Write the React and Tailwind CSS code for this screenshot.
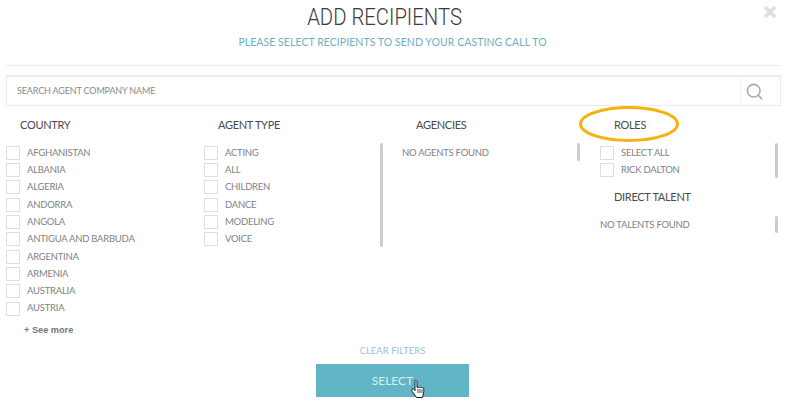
import { Search } from 'lucide-react';

const countries = ['AFGHANISTAN', 'ALBANIA', 'ALGERIA', 'ANDORRA', 'ANGOLA', 'ANTIGUA AND BARBUDA', 'ARGENTINA', 'ARMENIA', 'AUSTRALIA', 'AUSTRIA'];
const agentTypes = ['ACTING', 'ALL', 'CHILDREN', 'DANCE', 'MODELING', 'VOICE'];
const roles = ['SELECT ALL', 'RICK DALTON'];

function CheckRow({ label }) {
    return (
        <div className="flex h-[17.33px] items-center">
            <span className="h-[14px] w-[14px] shrink-0 border border-[#dedede] bg-white"></span>
            <span className="ml-[7px] whitespace-nowrap text-[9.5px] tracking-[-0.25px] text-[#827f85]">{label}</span>
        </div>
    );
}

function Heading({ children, className = '' }) {
    return <h3 className={`text-[11px] font-normal leading-[16px] tracking-[-0.3px] text-[#4a4a4a] ${className}`}>{children}</h3>;
}

function ScrollBar({ className = '' }) {
    return <div className={`w-[3px] shrink-0 rounded-sm bg-[#cccccc] ${className}`}></div>;
}

export default function App() {
    return (
        <div className="relative h-[402px] w-[787px] overflow-hidden bg-white font-['Lato',sans-serif]">
            <header className="flex h-[65px] flex-col items-center">
                <h1 className="mr-[17px] mt-[3px] scale-x-[0.845] font-['Roboto',sans-serif] text-[24px] font-light leading-[28px] text-[#3b3b3b]">ADD RECIPIENTS</h1>
                <p className="mr-[2px] mt-[3px] text-[10.5px] leading-[16px] tracking-[0.06px] text-[#6fb0bf]">PLEASE SELECT RECIPIENTS TO SEND YOUR CASTING CALL TO</p>
            </header>
            <button className="absolute right-[10px] top-[4px] text-[#dedede]">
                <svg width="14" height="16" viewBox="0 0 14 16"><path d="M2 3l10 10M12 3L2 13" stroke="currentColor" strokeWidth="3.6" /></svg>
            </button>

            <div className="mx-[6px] h-[1px] bg-[#eeeeee]"></div>

            <div className="mx-[6px] mt-[9px] flex h-[31px] items-center justify-between border border-t-2 border-[#ececec]">
                <span className="pl-[10px] text-[9px] tracking-[-0.15px] text-[#8a8a8a]">SEARCH AGENT COMPANY NAME</span>
                <div className="flex h-full w-[40px] items-center justify-center border-l border-[#f3f3f3]">
                    <Search size={19} strokeWidth={2} className="-translate-x-[6px] text-[#a9a9a9]" />
                </div>
            </div>

            <div className="ml-[6px] mt-[11px] flex">
                <section className="w-[198px]">
                    <Heading className="ml-[14px]">COUNTRY</Heading>
                    <div className="mt-[11px]">
                        {countries.map((c) => <CheckRow key={c} label={c} />)}
                    </div>
                    <a className="ml-[18px] mt-[6px] block font-['Liberation_Sans',sans-serif] text-[9.2px] font-bold leading-[14px] text-[#777777]">+ See more</a>
                </section>

                <section className="w-[198px]">
                    <Heading className="ml-[14px]">AGENT TYPE</Heading>
                    <div className="mt-[11px] flex">
                        <div className="w-[176px]">
                            {agentTypes.map((c) => <CheckRow key={c} label={c} />)}
                        </div>
                        <ScrollBar className="-mt-[1px] h-[104px]" />
                    </div>
                </section>

                <section className="w-[198px]">
                    <Heading className="ml-[14px]">AGENCIES</Heading>
                    <div className="mt-[11px] flex">
                        <p className="w-[175px] pt-[1px] text-[9.5px] leading-[16px] tracking-[-0.25px] text-[#827f85]">NO AGENTS FOUND</p>
                        <ScrollBar className="-mt-[1px] h-[18px]" />
                    </div>
                </section>

                <section className="w-[178px]">
                    <Heading className="ml-[14px]">ROLES</Heading>
                    <div className="mt-[11px] flex justify-between">
                        <div>
                            {roles.map((c) => <CheckRow key={c} label={c} />)}
                        </div>
                        <ScrollBar className="-mt-[1px] h-[35px]" />
                    </div>
                    <Heading className="ml-[14px] mt-[10px]">DIRECT TALENT</Heading>
                    <div className="mt-[11px] flex justify-between">
                        <p className="pt-[1px] text-[9.5px] leading-[16px] tracking-[-0.25px] text-[#827f85]">NO TALENTS FOUND</p>
                        <ScrollBar className="h-[17px]" />
                    </div>
                </section>
            </div>

            <div className="absolute bottom-[5px] left-[316px] w-[153px]">
                <p className="mb-[6px] text-center text-[9.5px] leading-[14px] text-[#9cc4cf]">CLEAR FILTERS</p>
                <button className="h-[33px] w-full bg-[#62b5c4] text-center text-[12px] text-[#d7eef2]">SELECT</button>
            </div>

            {/* highlight around the roles heading */}
            <svg className="absolute left-[577px] top-[105px]" width="104" height="38" viewBox="0 0 104 38">
                <ellipse cx="52" cy="19" rx="48.5" ry="16.5" fill="none" stroke="#f6b310" strokeWidth="3" />
            </svg>

            {/* mouse pointer */}
            <svg className="absolute left-[410px] top-[379px]" width="17" height="21" viewBox="0 0 17 21">
                <path d="M5 1.5c.9-.6 2 0 2 1v6l1 0c.5-.6 1.5-.5 2 .1.5-.5 1.500-.4 1.900.3.600-.4 1.600-.1 1.800.8.300 1.800.200 3.600-.3 5.300l-.9 3.500H6.500L2.700 13c-.8-1-1.300-2.200-.7-2.800.600-.5 1.500-.2 2.100.5l.9 1V2.500c0-.4 0-.8 0-1z" fill="#fff" stroke="#222" strokeWidth="1" strokeLinejoin="round" />
                <path d="M8 10v4M10 10v4M12 10.500v3.500" stroke="#222" strokeWidth=".8" />
            </svg>
        </div>
    );
}
